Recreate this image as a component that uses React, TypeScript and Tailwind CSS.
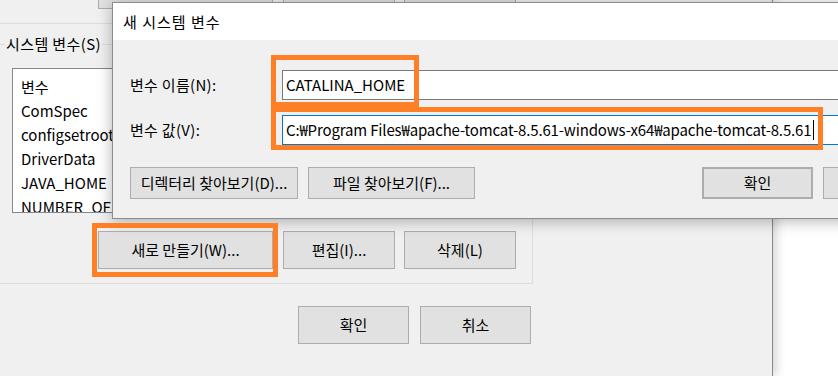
import React from "react";

const FONT = "font-['Noto_Sans_CJK_KR','Noto_Sans',sans-serif]";

function Btn({ cls, children }: { cls: string; children?: React.ReactNode }) {
  return (
    <div
      className={`flex shrink-0 items-center justify-center border border-[#adadad] bg-[#e1e1e1] text-[15px] leading-[20px] text-black ${cls}`}
    >
      {children}
    </div>
  );
}

function ButtonRow({ labels }: { labels: boolean }) {
  return (
    <div className="flex">
      <Btn cls="ml-[98px] h-[38px] w-[175px]">{labels ? "새로 만들기(W)..." : null}</Btn>
      <Btn cls="ml-[10px] h-[38px] w-[112px]">{labels ? "편집(I)..." : null}</Btn>
      <Btn cls="ml-[9px] h-[38px] w-[112px]">{labels ? "삭제(L)" : null}</Btn>
    </div>
  );
}

export default function App() {
  const rows = ["ComSpec", "configsetroot", "DriverData", "JAVA_HOME", "NUMBER_OF_PROCESSORS"];
  return (
    <div className={`relative h-[376px] w-[838px] overflow-hidden bg-white ${FONT}`}>
      {/* background window: 환경 변수 */}
      <div className="absolute left-0 top-0 flex h-[376px] w-[773px] flex-col border-r border-[#8a8a8a] bg-[#f0f0f0] shadow-[3px_0_10px_rgba(0,0,0,0.18)]">
        <div className="mt-[-29px]">
          <ButtonRow labels={false} />
        </div>
        {/* user variables group bottom */}
        <div className="mt-[14px] h-px w-[533px] bg-[#dcdcdc]" />
        {/* system variables group */}
        <fieldset className="ml-0 mt-[10px] h-[250px] w-[533px] border border-l-0 border-[#dcdcdc]">
          <legend className="ml-[5px] px-[1px] text-[15px] leading-[20px] tracking-[0.4px] text-black">시스템 변수(S)</legend>
          <div className="ml-[12px] mt-[14px] h-[145px] w-[508px] overflow-hidden border border-[#828790] bg-white pl-[8px] pt-[6px]">
            <div className="h-[24px] text-[15px] leading-[24px] text-black">변수</div>
            {rows.map((r) => (
              <div key={r} className="h-[24px] whitespace-nowrap text-[15px] leading-[24px] text-black">
                {r}
              </div>
            ))}
          </div>
          <div className="mt-[18px]">
            <ButtonRow labels={true} />
          </div>
        </fieldset>
        <div className="mt-[22px] flex">
          <Btn cls="ml-[298px] h-[38px] w-[111px]">확인</Btn>
          <Btn cls="ml-[11px] h-[38px] w-[111px]">취소</Btn>
        </div>
      </div>

      {/* dialog: 새 시스템 변수 */}
      <div className="absolute left-[112px] top-[2px] flex h-[217px] w-[760px] flex-col border border-[#8c8c8c] bg-[#f0f0f0] shadow-[0_2px_14px_rgba(0,0,0,0.3)]">
        <div className="flex h-[37px] items-center bg-white pl-[10px] text-[15px] leading-[20px] tracking-[1px] text-black">
          새 시스템 변수
        </div>
        <div className="flex flex-col pl-[17px]">
          <div className="mt-[30px] flex items-center">
            <div className="w-[152px] text-[15px] leading-[20px] tracking-[0.3px] text-black">변수 이름(N):</div>
            <div className="flex h-[30px] flex-1 items-center border border-[#7a7a7a] bg-white pl-[3px] text-[15px] text-black">
              CATALINA_HOME
            </div>
          </div>
          <div className="mt-[15px] flex items-center">
            <div className="w-[152px] text-[15px] leading-[20px] tracking-[0.3px] text-black">변수 값(V):</div>
            <div className="flex h-[30px] flex-1 items-center whitespace-nowrap border border-[#0078d7] bg-white pl-[3px] text-[15px] text-black">
              <span className="tracking-[-0.15px]">
                C:₩Program Files₩apache-tomcat-8.5.61-windows-x64₩apache-tomcat-8.5.61
              </span>
              <span className="ml-[2px] h-[20px] w-px bg-black" />
            </div>
          </div>
          <div className="mt-[22px] flex">
            <Btn cls="h-[32px] w-[168px]">디렉터리 찾아보기(D)...</Btn>
            <Btn cls="ml-[10px] h-[32px] w-[167px]">파일 찾아보기(F)...</Btn>
            <Btn cls="ml-[227px] h-[32px] w-[111px] border-2 border-[#0078d7]">확인</Btn>
            <Btn cls="ml-[10px] h-[32px] w-[111px]" />
          </div>
        </div>
      </div>

      {/* orange annotation boxes */}
      <div className="absolute left-[271px] top-[55px] h-[52px] w-[148px] border-[5px] border-[#ff7f27]" />
      <div className="absolute left-[271px] top-[107px] h-[43px] w-[552px] border-[5px] border-[#ff7f27]" />
      <div className="absolute left-[92px] top-[223px] h-[54px] w-[186px] border-[5px] border-[#ff7f27]" />
    </div>
  );
}
